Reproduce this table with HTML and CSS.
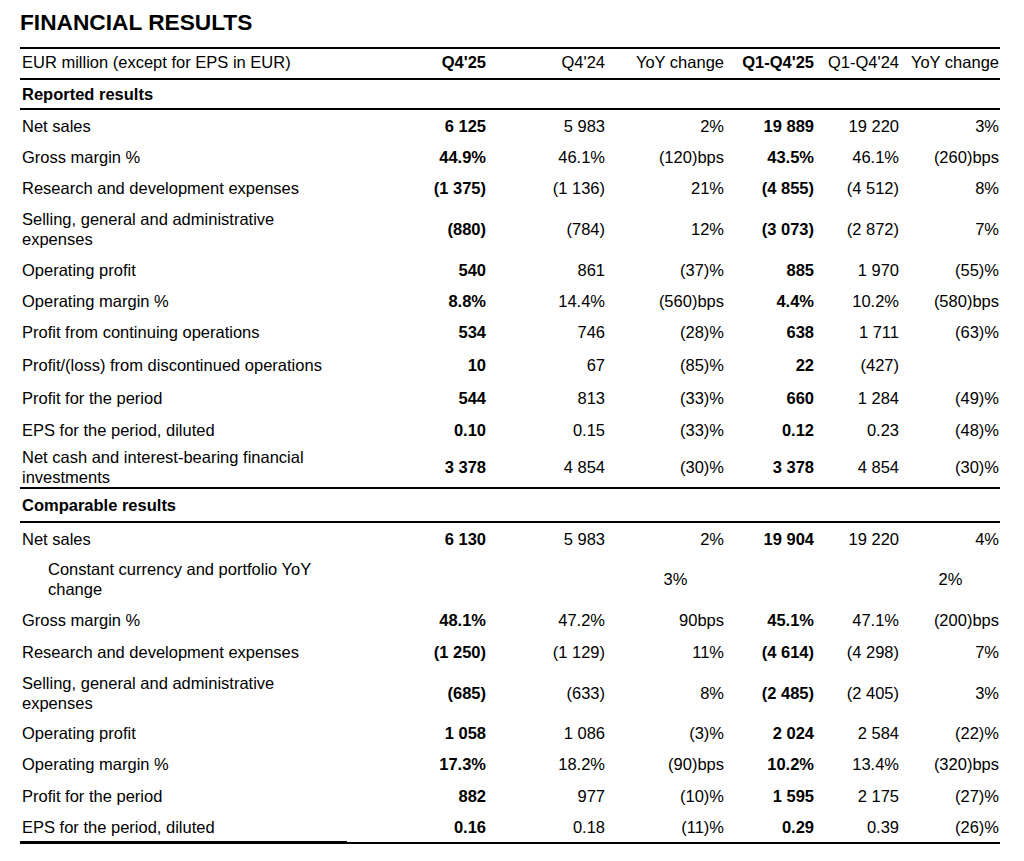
FILE: index.html
```html
<!DOCTYPE html>
<html lang="en">
<head>
<meta charset="utf-8">
<title>Financial results</title>
<link rel="stylesheet" href="styles.css">
</head>
<body>
<main class="page">
  <h1 class="title">FINANCIAL RESULTS</h1>
  <div class="table">
    <div class="row head h29">
      <div class="label">EUR million (except for EPS in EUR)</div>
      <div class="num b">Q4'25</div>
      <div class="num">Q4'24</div>
      <div class="num">YoY change</div>
      <div class="num b">Q1-Q4'25</div>
      <div class="num">Q1-Q4'24</div>
      <div class="num">YoY change</div>
    </div>
    <div class="row section h28">
      <div class="label b">Reported results</div>
    </div>

    <div class="row h31">
      <div class="label">Net sales</div>
      <div class="num b">6 125</div><div class="num">5 983</div><div class="num">2%</div>
      <div class="num b">19 889</div><div class="num">19 220</div><div class="num">3%</div>
    </div>
    <div class="row h31">
      <div class="label">Gross margin %</div>
      <div class="num b">44.9%</div><div class="num">46.1%</div><div class="num">(120)bps</div>
      <div class="num b">43.5%</div><div class="num">46.1%</div><div class="num">(260)bps</div>
    </div>
    <div class="row h31">
      <div class="label">Research and development expenses</div>
      <div class="num b">(1 375)</div><div class="num">(1 136)</div><div class="num">21%</div>
      <div class="num b">(4 855)</div><div class="num">(4 512)</div><div class="num">8%</div>
    </div>
    <div class="row h51">
      <div class="label"><span class="wrap">Selling, general and administrative expenses</span></div>
      <div class="num b">(880)</div><div class="num">(784)</div><div class="num">12%</div>
      <div class="num b">(3 073)</div><div class="num">(2 872)</div><div class="num">7%</div>
    </div>
    <div class="row h31">
      <div class="label">Operating profit</div>
      <div class="num b">540</div><div class="num">861</div><div class="num">(37)%</div>
      <div class="num b">885</div><div class="num">1 970</div><div class="num">(55)%</div>
    </div>
    <div class="row h31">
      <div class="label">Operating margin %</div>
      <div class="num b">8.8%</div><div class="num">14.4%</div><div class="num">(560)bps</div>
      <div class="num b">4.4%</div><div class="num">10.2%</div><div class="num">(580)bps</div>
    </div>
    <div class="row h32">
      <div class="label">Profit from continuing operations</div>
      <div class="num b">534</div><div class="num">746</div><div class="num">(28)%</div>
      <div class="num b">638</div><div class="num">1 711</div><div class="num">(63)%</div>
    </div>
    <div class="row h33">
      <div class="label">Profit/(loss) from discontinued operations</div>
      <div class="num b">10</div><div class="num">67</div><div class="num">(85)%</div>
      <div class="num b">22</div><div class="num">(427)</div><div class="num"></div>
    </div>
    <div class="row h33">
      <div class="label">Profit for the period</div>
      <div class="num b">544</div><div class="num">813</div><div class="num">(33)%</div>
      <div class="num b">660</div><div class="num">1 284</div><div class="num">(49)%</div>
    </div>
    <div class="row h32">
      <div class="label">EPS for the period, diluted</div>
      <div class="num b">0.10</div><div class="num">0.15</div><div class="num">(33)%</div>
      <div class="num b">0.12</div><div class="num">0.23</div><div class="num">(48)%</div>
    </div>
    <div class="row h41 ruled">
      <div class="label"><span class="wrap">Net cash and interest-bearing financial investments</span></div>
      <div class="num b">3 378</div><div class="num">4 854</div><div class="num">(30)%</div>
      <div class="num b">3 378</div><div class="num">4 854</div><div class="num">(30)%</div>
    </div>

    <div class="row section h32">
      <div class="label b">Comparable results</div>
    </div>
    <div class="row h31">
      <div class="label">Net sales</div>
      <div class="num b">6 130</div><div class="num">5 983</div><div class="num">2%</div>
      <div class="num b">19 904</div><div class="num">19 220</div><div class="num">4%</div>
    </div>
    <div class="row h50">
      <div class="label indent"><span class="wrap">Constant currency and portfolio YoY change</span></div>
      <div class="num"></div><div class="num"></div><div class="num mid mid-q">3%</div>
      <div class="num"></div><div class="num"></div><div class="num mid mid-y">2%</div>
    </div>
    <div class="row h32">
      <div class="label">Gross margin %</div>
      <div class="num b">48.1%</div><div class="num">47.2%</div><div class="num">90bps</div>
      <div class="num b">45.1%</div><div class="num">47.1%</div><div class="num">(200)bps</div>
    </div>
    <div class="row h31">
      <div class="label">Research and development expenses</div>
      <div class="num b">(1 250)</div><div class="num">(1 129)</div><div class="num">11%</div>
      <div class="num b">(4 614)</div><div class="num">(4 298)</div><div class="num">7%</div>
    </div>
    <div class="row h51">
      <div class="label"><span class="wrap">Selling, general and administrative expenses</span></div>
      <div class="num b">(685)</div><div class="num">(633)</div><div class="num">8%</div>
      <div class="num b">(2 485)</div><div class="num">(2 405)</div><div class="num">3%</div>
    </div>
    <div class="row h30">
      <div class="label">Operating profit</div>
      <div class="num b">1 058</div><div class="num">1 086</div><div class="num">(3)%</div>
      <div class="num b">2 024</div><div class="num">2 584</div><div class="num">(22)%</div>
    </div>
    <div class="row h32">
      <div class="label">Operating margin %</div>
      <div class="num b">17.3%</div><div class="num">18.2%</div><div class="num">(90)bps</div>
      <div class="num b">10.2%</div><div class="num">13.4%</div><div class="num">(320)bps</div>
    </div>
    <div class="row h32">
      <div class="label">Profit for the period</div>
      <div class="num b">882</div><div class="num">977</div><div class="num">(10)%</div>
      <div class="num b">1 595</div><div class="num">2 175</div><div class="num">(27)%</div>
    </div>
    <div class="row h29">
      <div class="label">EPS for the period, diluted</div>
      <div class="num b">0.16</div><div class="num">0.18</div><div class="num">(11)%</div>
      <div class="num b">0.29</div><div class="num">0.39</div><div class="num">(26)%</div>
    </div>
    <div class="endrule">
      <div class="endrule-thick"></div>
      <div class="endrule-thin"></div>
    </div>
  </div>
</main>
</body>
</html>
```

FILE: styles.css
```css
html, body {
  margin: 0;
  padding: 0;
  background: #ffffff;
}

body {
  font-family: "Liberation Sans", Arial, sans-serif;
  color: #000000;
}

.page {
  width: 980px;
  margin-left: 20px;
  padding-top: 9px;
}

.title {
  margin: 0 0 12px 0;
  font-size: 22.7px;
  line-height: 26px;
  font-weight: 700;
  letter-spacing: 0;
}

.table {
  border-top: 2px solid #000;
  font-size: 16.5px;
  line-height: 20px;
}

.row {
  display: grid;
  grid-template-columns: 366px 100px 119px 119px 90px 85px 100px;
  align-items: center;
  padding-right: 1px;
}

.head {
  border-bottom: 2px solid #000;
  padding-bottom: 3px;
}

.section {
  border-bottom: 2px solid #000;
}

.ruled {
  border-bottom: 2px solid #000;
}

.label {
  padding-left: 2px;
  white-space: nowrap;
}

.label .wrap {
  display: block;
  white-space: normal;
  max-width: 300px;
}

.label.indent {
  padding-left: 28px;
}

.label.indent .wrap {
  max-width: 275px;
}

.num {
  text-align: right;
  white-space: nowrap;
}

.num.mid {
  text-align: center;
}

.num.mid-q {
  padding-left: 22px;
}

.num.mid-y {
  padding-left: 3px;
}

.b {
  font-weight: 700;
}

.h28 { height: 28px; }
.h29 { height: 29px; }
.h30 { height: 30px; }
.h31 { height: 31px; }
.h32 { height: 32px; }
.h33 { height: 33px; }
.h41 { height: 41px; }
.h50 { height: 50px; }
.h51 { height: 51px; }

.head.h29 { height: 26px; }

.endrule {
  display: flex;
  align-items: flex-start;
}

.endrule-thick {
  width: 327px;
  height: 3px;
  background: #000;
}

.endrule-thin {
  flex: 1;
  height: 2px;
  margin-top: 1px;
  background: #000;
}
```
